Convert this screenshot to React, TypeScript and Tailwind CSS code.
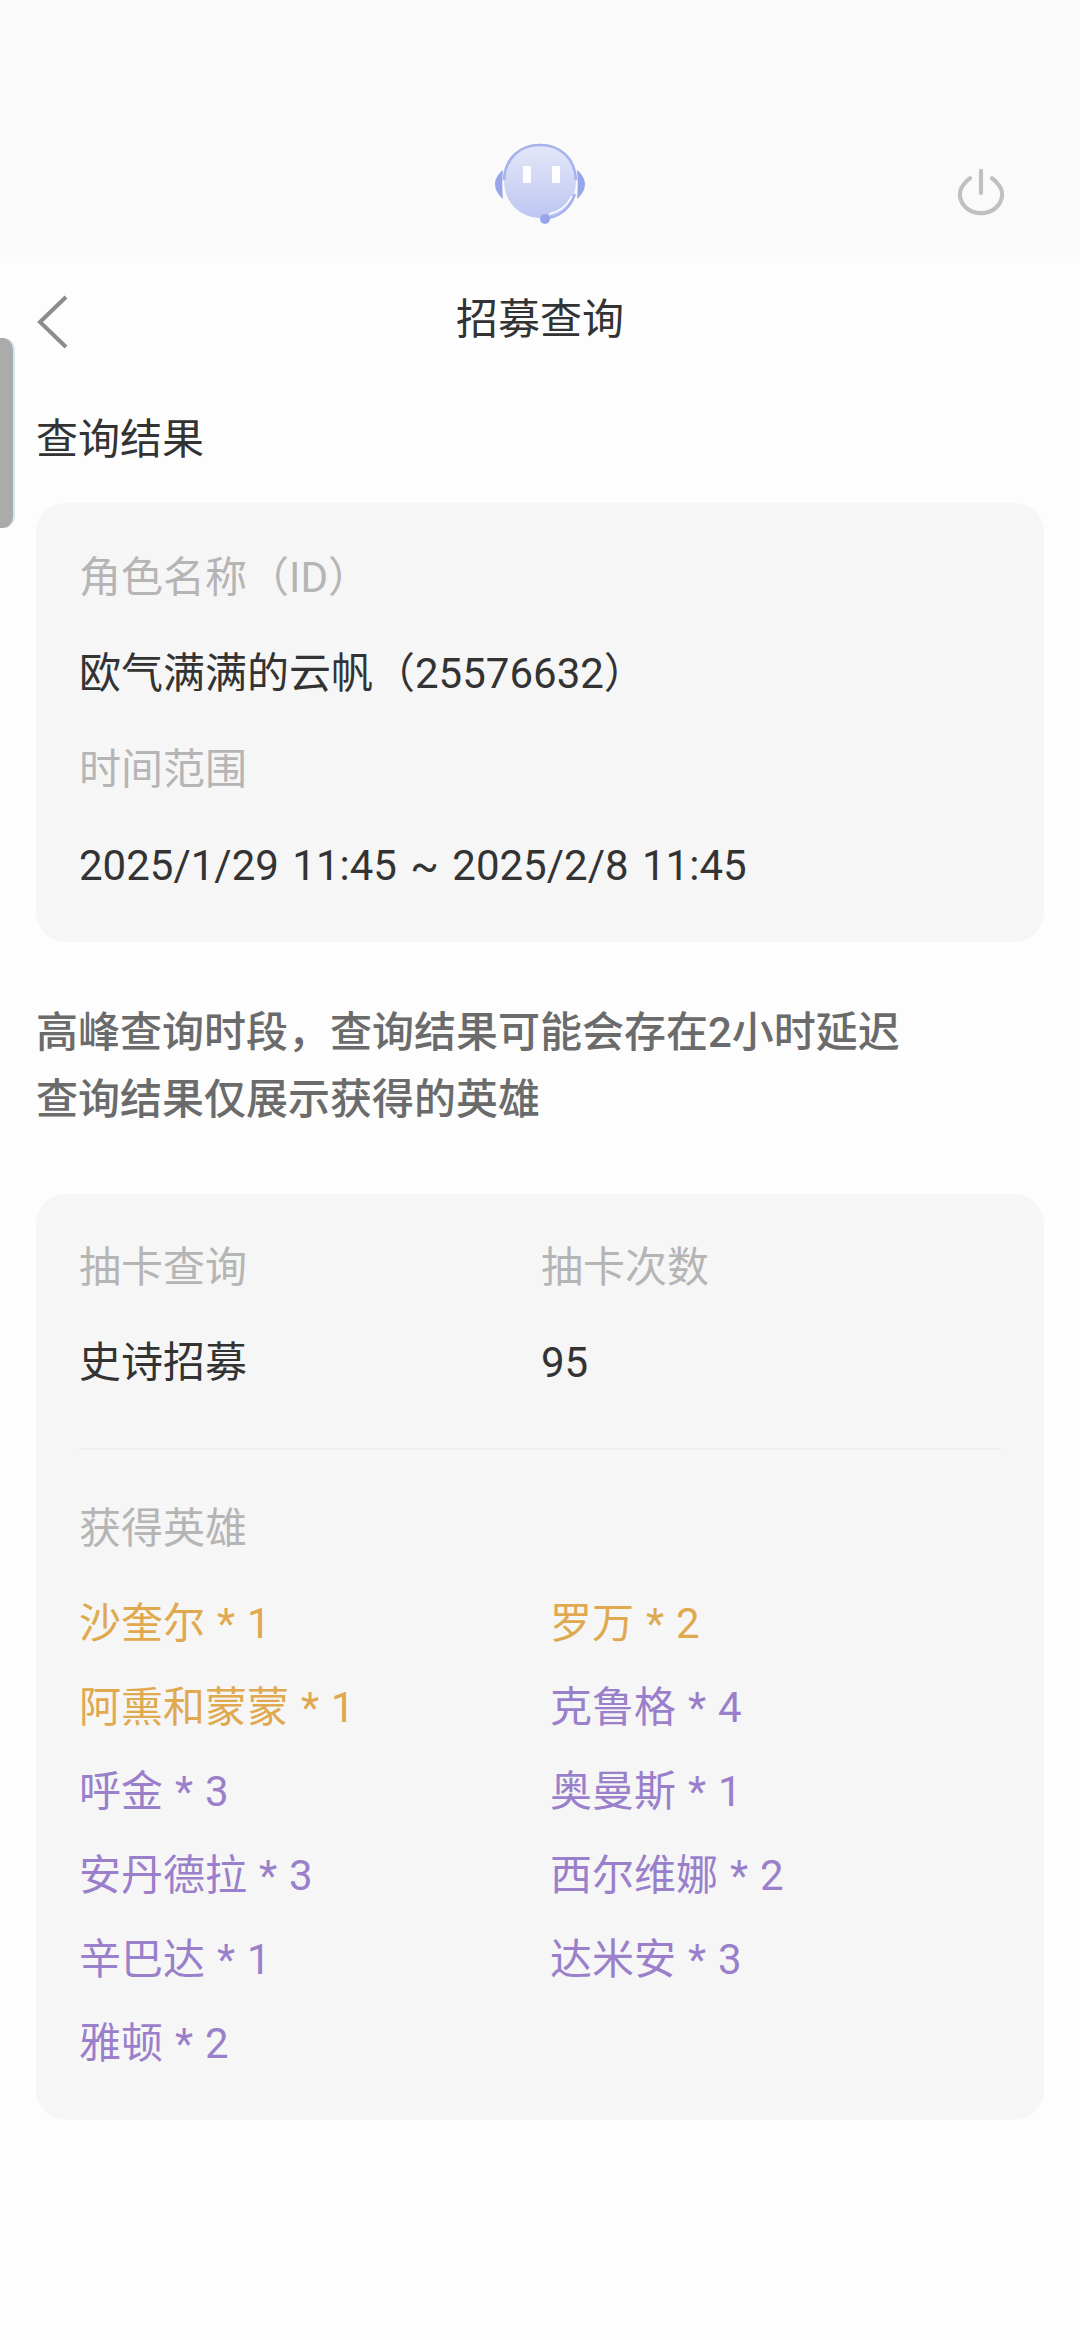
import React from "react";

const heroes = [
    { text: "沙奎尔 * 1", gold: true },
    { text: "罗万 * 2", gold: true },
    { text: "阿熏和蒙蒙 * 1", gold: true },
    { text: "克鲁格 * 4", gold: false },
    { text: "呼金 * 3", gold: false },
    { text: "奥曼斯 * 1", gold: false },
    { text: "安丹德拉 * 3", gold: false },
    { text: "西尔维娜 * 2", gold: false },
    { text: "辛巴达 * 1", gold: false },
    { text: "达米安 * 3", gold: false },
    { text: "雅顿 * 2", gold: false },
];

const Robot: React.FC = () => (
    <svg width="92" height="84" viewBox="0 0 92 84" fill="none">
        <defs>
            <linearGradient id="face" x1="0" y1="0" x2="0" y2="1">
                <stop offset="0" stopColor="#e4e7f9" />
                <stop offset="1" stopColor="#bcc6f0" />
            </linearGradient>
        </defs>
        <circle cx="46" cy="40" r="36" fill="url(#face)" />
        <path d="M10 38C11 16 26 3 46 3s35 13 36 35" stroke="#a5b2ec" strokeWidth="2.5" />
        <path d="M9 28C3 33 1 38 1 42s2 10 8 15c-1-9-1-20 0-29z" fill="#97a6ea" />
        <path d="M83 28c6 5 8 10 8 14s-2 10-8 15c1-9 1-20 0-29z" fill="#97a6ea" />
        <path d="M81 52C76 66 66 74 54 76" stroke="#a5b2ec" strokeWidth="2.5" />
        <path d="M78 54C73 64 65 70 55 72" stroke="#ffffff" strokeWidth="1.5" />
        <circle cx="51" cy="77" r="5" fill="#97a6ea" />
        <rect x="29" y="24" width="8" height="17" rx="1" fill="#ffffff" />
        <rect x="58" y="24" width="8" height="17" rx="1" fill="#ffffff" />
    </svg>
);

const PowerIcon: React.FC = () => (
    <svg width="46" height="48" viewBox="0 0 50 50" fill="none" stroke="#c0c0c0" strokeWidth="4.5" strokeLinecap="round">
        <path d="M13 10C6 15 2 22 2 27c0 12 10 21 23 21s23-9 23-21c0-5-4-12-11-17" />
        <path d="M25 2v24" />
    </svg>
);

const BackIcon: React.FC = () => (
    <svg width="32" height="54" viewBox="0 0 32 54" fill="none" stroke="#8c8c8c" strokeWidth="4">
        <path d="M30 2L4 27l26 25" />
    </svg>
);

const Label: React.FC<{ children: React.ReactNode }> = ({ children }) => (
    <p className="h-[60px] text-[42px] leading-[60px] text-[#b5b5b5]">{children}</p>
);

const Value: React.FC<{ children: React.ReactNode }> = ({ children }) => (
    <p className="h-[60px] text-[42px] leading-[60px] text-[#333333]">{children}</p>
);

export default function App() {
    return (
        <div className="relative h-[2340px] w-[1080px] overflow-hidden bg-[#fdfdfd] font-['Roboto','Noto_Sans_CJK_SC',sans-serif]">
            {/* side handle */}
            <div className="absolute left-0 top-[338px] h-[190px] w-[15px] rounded-r-[12px] border-r-2 border-[#d5e6ee] bg-[#ababab]" />

            <header className="relative flex h-[257px] items-end justify-center bg-[#fafafa] pb-[31px]">
                <Robot />
                <div className="absolute right-[76px] top-[168px]">
                    <PowerIcon />
                </div>
            </header>

            <div className="relative flex h-[122px] items-center justify-center pt-[4px]">
                <div className="absolute left-[36px] top-[38px]">
                    <BackIcon />
                </div>
                <h1 className="text-[42px] leading-[60px] font-normal text-[#333333]">招募查询</h1>
            </div>

            <main className="px-[36px] pt-[31px]">
                <h2 className="text-[42px] leading-[60px] font-normal text-[#333333]">查询结果</h2>

                <section className="mt-[33px] h-[439px] rounded-[30px] bg-[#f6f6f6] px-[43px] pt-[45px]">
                    <div className="flex flex-col gap-[36px]">
                        <Label>角色名称（ID）</Label>
                        <Value>欧气满满的云帆（25576632）</Value>
                        <Label>时间范围</Label>
                        <Value>
                            <span className="[word-spacing:3px]">2025/1/29 11:45 ~ 2025/2/8 11:45</span>
                        </Value>
                    </div>
                </section>

                <div className="mt-[57px] text-[42px] leading-[67px] font-medium text-[#6b6b6b]">
                    <p>高峰查询时段，查询结果可能会存在2小时延迟</p>
                    <p>查询结果仅展示获得的英雄</p>
                </div>

                <section className="mt-[61px] h-[926px] rounded-[30px] bg-[#f6f6f6] px-[43px] pt-[44px]">
                    <div className="flex">
                        <div className="flex w-[462px] flex-col gap-[35px]">
                            <Label>抽卡查询</Label>
                            <Value>史诗招募</Value>
                        </div>
                        <div className="flex flex-col gap-[35px]">
                            <Label>抽卡次数</Label>
                            <Value>95</Value>
                        </div>
                    </div>
                    <div className="mt-[55px] h-[2px] bg-[#efefef]" />
                    <div className="mt-[49px]">
                        <Label>获得英雄</Label>
                    </div>
                    <div className="mt-[35px] grid grid-cols-[471px_1fr] gap-y-[24px] [word-spacing:1.5px]">
                        {heroes.map((hero) => (
                            <p
                                key={hero.text}
                                className={`h-[60px] text-[42px] leading-[60px] ${hero.gold ? "text-[#e0a94f]" : "text-[#9a7fcb]"}`}
                            >
                                {hero.text}
                            </p>
                        ))}
                    </div>
                </section>
            </main>
        </div>
    );
}
